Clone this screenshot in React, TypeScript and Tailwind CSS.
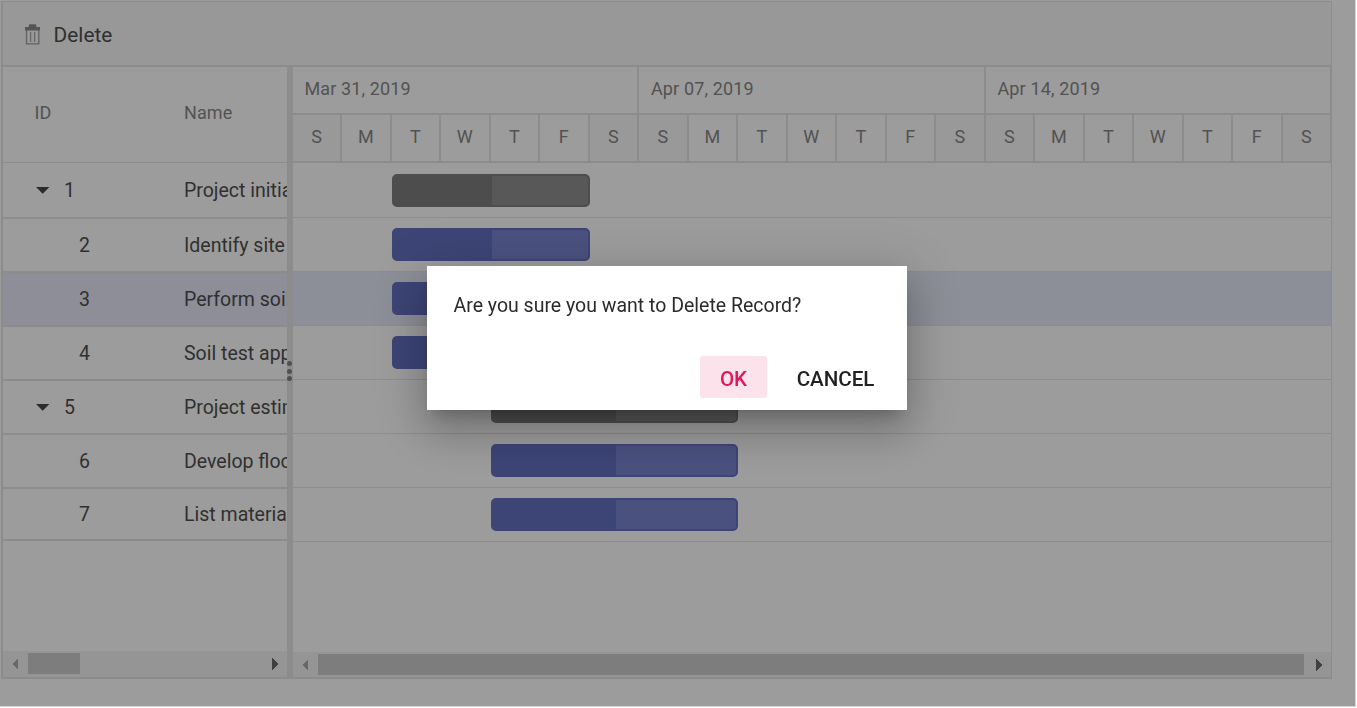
import React from "react";

type Task = {
  id: number;
  name: string;
  parent?: boolean;
  selected?: boolean;
  start: number;
  width: number;
  progress: number;
};

const tasks: Task[] = [
  { id: 1, name: "Project initiation", parent: true, start: 99, width: 198, progress: 98 },
  { id: 2, name: "Identify site location", start: 99, width: 198, progress: 98 },
  { id: 3, name: "Perform soil test", selected: true, start: 99, width: 198, progress: 98 },
  { id: 4, name: "Soil test approval", start: 99, width: 198, progress: 98 },
  { id: 5, name: "Project estimation", parent: true, start: 198, width: 247, progress: 123 },
  { id: 6, name: "Develop floor plan", start: 198, width: 247, progress: 123 },
  { id: 7, name: "List materials", start: 198, width: 247, progress: 123 },
];

const weeks = ["Mar 31, 2019", "Apr 07, 2019", "Apr 14, 2019"];
const days = ["S", "M", "T", "W", "T", "F", "S"];

function TrashIcon() {
  return (
    <svg width="16" height="21" viewBox="0 0 16 21" className="shrink-0" fill="none">
      <path d="M0 3H3.8V1.5Q3.8 0.3 5 0.3H10.1Q11.3 0.3 11.3 1.5V3H15V6.6H0Z" fill="#555555" />
      <path d="M1.5 6V19.8H13.8V6" stroke="#626262" strokeWidth="1.3" />
      <path d="M5.6 8V18M9.6 8V18" stroke="#666666" strokeWidth="1.2" />
    </svg>
  );
}

function Arrow({ dir, dark }: { dir: "left" | "right"; dark?: boolean }) {
  return (
    <svg width="6" height="12" viewBox="0 0 6 12" shapeRendering="crispEdges" className="shrink-0">
      <path d={dir === "left" ? "M6 0V12L0 6Z" : "M0 0V12L6 6Z"} fill={dark ? "#404040" : "#686868"} />
    </svg>
  );
}

function TreeRow({ task }: { task: Task }) {
  const height = task.id === 1 ? "h-14" : task.id === 7 ? "h-[52px]" : "h-[54px]";
  return (
    <div
      className={`flex shrink-0 items-center overflow-hidden whitespace-nowrap border-b-2 border-[#8c8c8c] pt-0.5 ${height} ${task.selected ? "bg-[#8d8e98]" : ""}`}
    >
      <div className="flex w-[181px] shrink-0 items-center">
        {task.parent ? (
          <>
            <svg width="14" height="8" viewBox="0 0 14 8" className="ml-[33px]">
              <path d="M0 0H13.4L6.7 6.8Z" fill="#2b2b2b" />
            </svg>
            <span className="ml-[14px]">{task.id}</span>
          </>
        ) : (
          <span className="ml-[76px]">{task.id}</span>
        )}
      </div>
      <span>{task.name}</span>
    </div>
  );
}

function TaskBar({ task }: { task: Task }) {
  return (
    <div
      className={`box-border h-[33px] overflow-hidden rounded-[5px] border-2 ${task.parent ? "border-[#4d4d4d] bg-[#585858]" : "border-[#3d4577] bg-[#4b517f]"}`}
      style={{ marginLeft: task.start, width: task.width }}
    >
      <div
        className={`h-full ${task.parent ? "bg-[#4d4d4d]" : "bg-[#3d4577]"}`}
        style={{ width: task.progress }}
      />
    </div>
  );
}

function TreeGrid() {
  return (
    <div className="flex w-[284px] shrink-0 flex-col overflow-hidden text-[19.5px] text-[#303030]">
      <div className="flex h-24 shrink-0 items-center border-b border-[#8c8c8c] pb-[5px] text-[18px] text-[#525252]">
        <span className="w-[181px] shrink-0 pl-[31.5px]">ID</span>
        <span className="tracking-[0.1px]">Name</span>
      </div>
      {tasks.map((t) => (
        <TreeRow key={t.id} task={t} />
      ))}
      <div className="mt-auto flex h-[26px] shrink-0 items-center bg-[#959595] pb-px pl-[9px] pr-[9px]">
        <Arrow dir="left" />
        <div className="ml-[10px] h-[21px] w-[52px] bg-[#7d7d7d]" />
        <div className="grow" />
        <Arrow dir="right" dark />
      </div>
    </div>
  );
}

function Chart() {
  return (
    <div className="flex w-[1039px] shrink-0 flex-col overflow-hidden">
      <div className="flex h-12 shrink-0 text-[18px] tracking-[0.13px] text-[#525252]">
        {weeks.map((w, i) => (
          <div
            key={w}
            className={`flex items-center border-b-2 border-r-2 border-[#8c8c8c] pb-[3px] ${i === 0 ? "w-[346px] pl-[11.5px]" : "w-[346.5px] pl-3"}`}
          >
            {w}
          </div>
        ))}
      </div>
      <div className="flex h-12 shrink-0 text-[18px] text-[#525252]">
        {weeks.flatMap((w, wi) =>
          days.map((d, i) => (
            <div
              key={`${w}-${i}`}
              className={`flex items-center justify-center border-b-2 border-r-2 border-[#8c8c8c] pb-[3px] ${i % 6 === 0 ? "bg-[#999999]" : ""} ${wi === 0 && i === 0 ? "w-[49px]" : "w-[49.5px]"}`}
            >
              {d}
            </div>
          )),
        )}
      </div>
      <div className="flex grow flex-col border-r border-[#8c8c8c]">
        {tasks.map((t, i) => (
          <div
            key={t.id}
            className={`shrink-0 border-b border-[#8c8c8c] ${i === 0 ? "h-[55px] pt-[11px]" : "h-[54px] pt-[10px]"} ${t.selected ? "bg-[#8d8f98]" : ""}`}
          >
            <TaskBar task={t} />
          </div>
        ))}
        <div className="mt-auto flex h-[25px] items-center bg-[#959595] pl-[9px] pr-[9px]">
          <Arrow dir="left" />
          <div className="ml-[10px] h-[21px] w-[986px] bg-[#7d7d7d]" />
          <div className="grow" />
          <Arrow dir="right" dark />
        </div>
      </div>
    </div>
  );
}

function ConfirmDialog() {
  return (
    <div className="fixed left-[427px] top-[266px] flex h-36 w-[480px] flex-col justify-between bg-white pb-3 pl-[26.5px] pr-3 pt-[25px] shadow-[0_11px_15px_-7px_rgba(0,0,0,0.2),0_24px_38px_3px_rgba(0,0,0,0.14),0_9px_46px_8px_rgba(0,0,0,0.14)]">
      <p className="whitespace-nowrap text-[19.5px] leading-[30px] text-[#2b2b2b]">
        Are you sure you want to Delete Record?
      </p>
      <div className="flex justify-end gap-[9px] text-[20.6px] font-medium">
        <button className="flex h-[42px] w-[67px] items-center justify-center rounded-[3px] bg-[#fce2eb] pt-[5px] text-[#e3165b]">
          OK
        </button>
        <button className="flex h-[42px] w-[119px] items-center justify-center rounded-[3px] pt-[5px] tracking-[-0.05px] text-[#212121]">
          CANCEL
        </button>
      </div>
    </div>
  );
}

export default function App() {
  return (
    <div className="h-[708px] w-[1357px] overflow-hidden bg-white pb-px pr-px font-['Roboto',sans-serif]">
      <div className="h-[707px] border-b border-r border-[#d6d6d6] bg-[#9c9c9c] pl-px pt-px">
        <div className="flex h-[678px] w-[1331px] flex-col border-b-2 border-l-2 border-[#8c8c8c]">
          <div className="flex h-[66px] shrink-0 items-center border-b-2 border-r border-t border-b-[#8c8c8c] border-r-[#8c8c8c] border-t-[#8c8c8c] bg-[#989898] pl-[22px] pt-[2px] text-[20.8px] text-[#303030]">
            <TrashIcon />
            <span className="ml-[12.5px] pt-0.5 tracking-[0.05px]">Delete</span>
          </div>
          <div className="flex min-h-0 grow">
            <TreeGrid />
            <div className="flex w-1.5 shrink-0 flex-col items-center gap-[2.5px] bg-[#8c8c8c] pt-[294px]">
              {[0, 1, 2].map((n) => (
                <span key={n} className="-ml-px size-[5px] shrink-0 rounded-full bg-[#505050]" />
              ))}
            </div>
            <Chart />
          </div>
        </div>
      </div>
      <ConfirmDialog />
    </div>
  );
}
